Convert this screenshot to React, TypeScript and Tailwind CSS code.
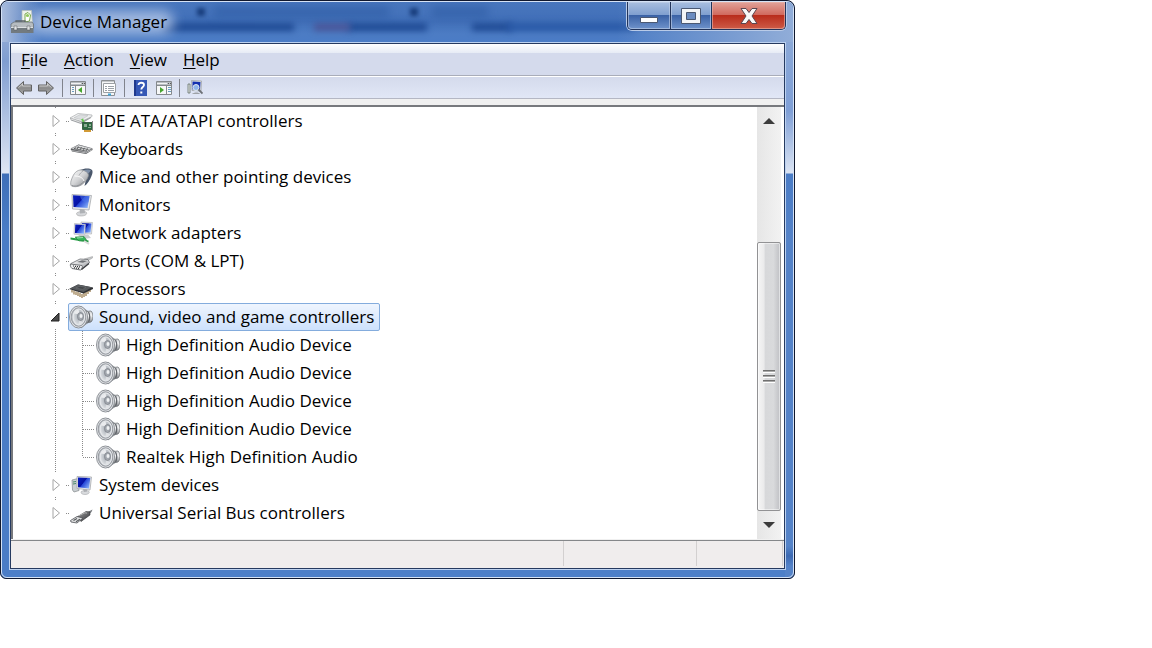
import { useState } from "react";
import type { ReactNode } from "react";

type IconName =
  | "ide"
  | "keyboard"
  | "mouse"
  | "monitor"
  | "network"
  | "port"
  | "cpu"
  | "speaker"
  | "system"
  | "usb";

type Category = {
  label: string;
  icon: IconName;
  children?: string[];
};

const CATEGORIES: Category[] = [
  { label: "IDE ATA/ATAPI controllers", icon: "ide" },
  { label: "Keyboards", icon: "keyboard" },
  { label: "Mice and other pointing devices", icon: "mouse" },
  { label: "Monitors", icon: "monitor" },
  { label: "Network adapters", icon: "network" },
  { label: "Ports (COM & LPT)", icon: "port" },
  { label: "Processors", icon: "cpu" },
  {
    label: "Sound, video and game controllers",
    icon: "speaker",
    children: [
      "High Definition Audio Device",
      "High Definition Audio Device",
      "High Definition Audio Device",
      "High Definition Audio Device",
      "Realtek High Definition Audio",
    ],
  },
  { label: "System devices", icon: "system" },
  { label: "Universal Serial Bus controllers", icon: "usb" },
];

const MENUS = ["File", "Action", "View", "Help"];

const dotsDown = "bg-[repeating-linear-gradient(to_bottom,#8a8a8a_0_1px,transparent_1px_2px)]";
const dotsAcross = "bg-[repeating-linear-gradient(to_right,#8a8a8a_0_1px,transparent_1px_2px)]";

// shared gradients for the device icons
function IconDefs() {
  return (
    <svg className="absolute size-0" aria-hidden="true">
      <defs>
        <linearGradient id="screen" x1="0" y1="0" x2="1" y2="0.7">
          <stop offset="0" stopColor="#0a1fc0" />
          <stop offset="0.5" stopColor="#0612a4" />
          <stop offset="0.55" stopColor="#2546d8" />
          <stop offset="1" stopColor="#7fa8f6" />
        </linearGradient>
        <linearGradient id="metal" x1="0" y1="0" x2="1" y2="1">
          <stop offset="0" stopColor="#fbfbfb" />
          <stop offset="0.5" stopColor="#d2d3d5" />
          <stop offset="1" stopColor="#808388" />
        </linearGradient>
        <linearGradient id="darkMetal" x1="0" y1="0" x2="1" y2="1">
          <stop offset="0" stopColor="#a0a0a0" />
          <stop offset="1" stopColor="#303236" />
        </linearGradient>
        <linearGradient id="magnet" x1="0" y1="0" x2="0" y2="1">
          <stop offset="0" stopColor="#d6d8db" />
          <stop offset="0.4" stopColor="#f2f3f4" />
          <stop offset="1" stopColor="#74777c" />
        </linearGradient>
        <radialGradient id="cone" cx="0.6" cy="0.45" r="0.6">
          <stop offset="0" stopColor="#8f959c" />
          <stop offset="0.5" stopColor="#bcc1c7" />
          <stop offset="1" stopColor="#dfe2e5" />
        </radialGradient>
        <linearGradient id="arrow" x1="0" y1="0" x2="0" y2="1">
          <stop offset="0" stopColor="#c2c2c2" />
          <stop offset="0.5" stopColor="#8b8b8b" />
          <stop offset="1" stopColor="#a8a8a8" />
        </linearGradient>
      </defs>
    </svg>
  );
}

const ICONS: Record<IconName, ReactNode> = {
  ide: (
    <>
      <path d="m1 9 1 2.500 10 3.500 10-6V6z" fill="#9c9fa2" />
      <path d="M1 9 9 4.500 23 6v1.500l-10.500 5z" fill="#eff0f1" stroke="#a9acae" strokeWidth=".7" />
      <path d="m5 8.700 6-3 8 .9-6.500 4z" fill="#dcdee0" stroke="#b5b8ba" strokeWidth=".5" />
      <path d="m2 10 10 3.500" stroke="#f5f5f5" strokeWidth=".8" />
      <path d="m12 10.500 2-1 1.500 3-1.500 1z" fill="#67c953" />
      <path d="M13.500 13.500h10v7h-10z" fill="#2d6940" stroke="#244a31" strokeWidth=".8" />
      <path d="M15 15h3v3h-3zM20 15h2v2h-2zM19 18h3v1h-3z" fill="#8caa94" />
      <path d="M15 21h7v2h-7z" fill="#d19a35" />
      <path d="M23.500 12v10" stroke="#888" />
    </>
  ),
  keyboard: (
    <>
      <path d="m1.500 12 8-4.500 14 4v1.500L17 17 3 14.500z" fill="#5b5d60" />
      <path d="m2 11.500 7.500-3.500 13.500 3.500-6.500 3.500z" fill="#e2e3e4" stroke="#85878a" strokeWidth=".5" />
      <path
        d="m5 11.500 12 2.500M7.500 10l12 2.600M6.500 10l-1 2M9.500 9.500 8 12.500M12.500 10l-1.500 3M15.500 10.800l-1.500 3M18.500 11.400l-1.500 3"
        stroke="#55585b"
        strokeWidth=".8"
        fill="none"
      />
      <path d="m2 13.500 14.500 2.300 6.500-3" stroke="#c9cacc" strokeWidth=".8" fill="none" />
    </>
  ),
  mouse: (
    <>
      <path d="M11 5c4-1.500 9-2.500 12 0 1 1 .5 4-.5 6-1.500 4-4 8-7 10l2-9c0-3-3-5-6.500-7z" fill="#4a576b" />
      <path d="M14 5.500c3-1 6-1.500 8 0l-3.500 4c-.5-2-2.500-3-4.500-4z" fill="#7e8fa8" />
      <path
        d="M2 16c2-6 4-10 9-11 4 0 8 2 8.500 5-.5 4-4 8-8 10.500-3 1.500-7 1.500-9 .5-1-1-1-3-.5-5z"
        fill="url(#metal)"
        stroke="#8c8f94"
        strokeWidth=".7"
      />
      <path d="M5.500 11c4 0 8 1 9.500 5" stroke="#fff" strokeWidth=".9" fill="none" />
      <path d="M10 10.500c1-2 2-3 4-4.500" stroke="#9fa2a7" strokeWidth=".8" fill="none" />
      <path d="M3 20.500c4 1.500 8 0 12-4" stroke="#8e9196" fill="none" />
    </>
  ),
  monitor: (
    <>
      <path d="M7.500 20.500c0-2 9-3 10-1 1 2-2 3.500-5 3.500s-5-.5-5-2.500z" fill="#d5d7da" stroke="#999" strokeWidth=".5" />
      <path d="m10.500 16 5-.5.5 4.500-5 .5z" fill="#aeb1b5" />
      <path d="M3 1.500 22.500 2.500 20 17 3.500 16z" fill="#e6e8eb" stroke="#a7aaad" strokeWidth=".8" />
      <path d="m4 2.300 16.500.9L18.500 15 4.500 14z" fill="url(#screen)" />
      <path d="m11 2.700 9.500.5-1 6C16 10 12 8 11 2.700z" fill="#4a74e8" opacity=".55" />
    </>
  ),
  network: (
    <>
      <path d="m12 1 11.500.5-1 11.500-10-.5z" fill="#e6e8eb" stroke="#a7aaad" strokeWidth=".6" />
      <path d="m13 2 9.500.5-1 9-8 .3z" fill="url(#screen)" />
      <path d="m5.500 2.500 11 .8-.7 10.700-10.800-.8z" fill="#e6e8eb" stroke="#a7aaad" strokeWidth=".6" />
      <path d="m6.300 3.500 9.200.6-.6 8.600-9-.6z" fill="url(#screen)" />
      <path d="m9 14 10-.5 3 3.500-8 1z" fill="#c9cccf" />
      <path d="m1.500 16.500 7 1 11 2v2l-9-1.500-9-1.500z" fill="#239c43" />
      <path d="m6 16 9-.5 3 4-8 .5z" fill="#35b457" stroke="#1e7735" strokeWidth=".5" />
      <path d="m8 17 6-.5" stroke="#9be6ae" />
      <path d="m15 20 5 3" stroke="#d8d8d8" strokeWidth="2" />
    </>
  ),
  port: (
    <>
      <path d="m15 10 8.500-2.500v1.500l-6 3.500z" fill="#c4c6c8" stroke="#888" strokeWidth=".4" />
      <path d="m2 14.500 9-4.500 8 .5 1.500 3-8 7-9-1.500z" fill="url(#metal)" stroke="#6c6f73" strokeWidth=".8" />
      <path d="m1.500 15 11.500 1.500c1 1 0 4-1.500 4.500l-8.500-1.500C1.500 18 1 16.500 1.500 15z" fill="#eeeff0" stroke="#55585c" strokeWidth=".8" />
      <path d="M4 17h1m1 .3h1m1 .3h1m1 .3h1m-6 1h1m1 .3h1m1 .2h1" stroke="#333" strokeWidth="1.200" />
      <path d="m8 13 5-1.800 5 .8-4 1.800z" fill="#6f7276" />
      <path d="m12.500 20.500 7.500-6" stroke="#3a3c3f" strokeWidth="1.200" />
    </>
  ),
  cpu: (
    <>
      <path
        d="M3 13v2.500m2-2v4m2-3v3.500m2-3v4m2-3v4m2-3v4m2-5v4m2-5v4m2-6v4m2-5v3"
        stroke="#8a6a35"
        strokeWidth="1.100"
      />
      <path d="m0 12 9-4.500 15 3V12l-9.500 4.500z" fill="#2f3134" />
      <path d="m1 11.500 8-4 14 2.800-8.500 4.700z" fill="#56595c" />
      <path d="m7 11 4-1.800 6 1.200-3.500 2z" fill="#44474a" stroke="#7c7f82" strokeWidth=".4" />
    </>
  ),
  speaker: (
    <>
      <path d="M12 1.500 19 6.500v11L12 23z" fill="#a8acb2" stroke="#7d8187" strokeWidth=".7" />
      <path d="M17.500 6.500 22 6c2.500 2 2.500 9 0 11l-4.500 1z" fill="url(#magnet)" stroke="#63676c" strokeWidth=".7" />
      <path d="M19.500 7c1.500 3 1.500 7 0 10" stroke="#62666b" strokeWidth="1.300" fill="none" />
      <ellipse cx="9.500" cy="12" rx="9" ry="11" fill="#e4e6e9" stroke="#85898f" strokeWidth=".9" />
      <ellipse cx="9.500" cy="12" rx="7.300" ry="9.300" fill="#b9bdc3" stroke="#82868c" strokeWidth=".7" />
      <ellipse cx="9.800" cy="12" rx="5.800" ry="8" fill="url(#cone)" stroke="#eceef0" strokeWidth=".9" />
      <path d="M5 8.500C6 6 7.500 4.800 9.500 4.500l1.500 5z" fill="#eef0f2" opacity=".9" />
      <path d="m10 15 3.500 2c-1 1.800-2.500 2.500-4 2.500z" fill="#e8eaed" opacity=".7" />
      <ellipse cx="11.500" cy="11.500" rx="3" ry="4" fill="#a3a8af" stroke="#7b8087" strokeWidth=".7" />
      <ellipse cx="12" cy="11" rx="1.500" ry="2" fill="#eff1f3" />
    </>
  ),
  system: (
    <>
      <path d="m3 7 6-1.500 1 12L5 19l-1.500-2z" fill="#c9ced1" stroke="#84898c" strokeWidth=".7" />
      <path d="m4 9 3-.5M4 11l3-.5" stroke="#4c8a6b" />
      <path d="M12 19c0-1.500 7-2 8-.5 1 1.500-1 3-4 3s-4-1-4-2.500z" fill="#d8dadd" stroke="#9a9da0" strokeWidth=".5" />
      <path d="m14 16 4-.5v3l-3 .5z" fill="#abaeb2" />
      <path d="M8 3.500 22.500 4 21 17 8 15.500z" fill="#e6e8eb" stroke="#a7aaad" strokeWidth=".8" />
      <path d="m9 4.500 12.300.4L20 15.500l-11-1.200z" fill="url(#screen)" />
    </>
  ),
  usb: (
    <>
      <path d="m17 12 6.500-3.500-1 2.500-4 3z" fill="#777a7e" />
      <path d="m8 16 9-5.500 4 .5v3l-9 6.500z" fill="url(#darkMetal)" stroke="#2e3033" strokeWidth=".6" />
      <path d="m1.500 19.500 6.500-4 6 1.500-6 5-6-1z" fill="#dedfe0" stroke="#4e5155" strokeWidth=".8" />
      <path d="m4.500 19.500 3.500-2m-1 3.300 4-2.500" stroke="#55585b" strokeWidth="1.100" />
      <path d="m10 14.700 6-3 2 .5" stroke="#c4c4c4" strokeWidth=".8" fill="none" />
    </>
  ),
};

function DeviceIcon({ name }: { name: IconName }) {
  return (
    <svg viewBox="0 0 24 24" className="size-6 shrink-0" aria-hidden="true">
      {ICONS[name]}
    </svg>
  );
}

function AppIcon() {
  return (
    <svg viewBox="0 0 24 24" className="size-6" aria-hidden="true">
      <path d="M12 .5h9.500l1 13H12z" fill="#eef2ec" stroke="#b6beb8" strokeWidth=".7" />
      <path d="M15 12V4l3-1.500L20.500 5l-1 6z" fill="#fff" stroke="#7aa94c" />
      <circle cx="17.500" cy="5.500" r="1.600" fill="#92c95a" />
      <path d="M6 14v-3h9v3" fill="none" stroke="#5d6468" strokeWidth="1.300" />
      <path d="m1 14 3-2h18l1.500 2v4H1z" fill="#b6bcc0" stroke="#60676b" strokeWidth=".7" />
      <path d="M1 17h22.500v6H1z" fill="#727a7f" />
      <path d="M1 17.500h22" stroke="#dce0e2" />
      <path d="M4 16h3v4H4zM17 16h3v4h-3z" fill="#dfe2e4" stroke="#545b5f" strokeWidth=".5" />
    </svg>
  );
}

function ArrowIcon({ flip }: { flip?: boolean }) {
  return (
    <svg viewBox="0 0 18 16" className={flip ? "h-4 w-[18px] -scale-x-100" : "h-4 w-[18px]"} aria-hidden="true">
      <path d="m1.500 8 7-6.500v3.500h8v6h-8v3.500z" fill="url(#arrow)" stroke="#626262" strokeLinejoin="round" />
      <path d="m3.500 7.500 4-3.500v2h8" fill="none" stroke="#cfcfcf" strokeWidth=".8" />
    </svg>
  );
}

function PaneIcon({ flip }: { flip?: boolean }) {
  return (
    <svg viewBox="0 0 16 14" className="h-3.5 w-4" aria-hidden="true">
      <path d="M.5.5h15v13H.5z" fill="#f7f8f8" stroke="#85898d" />
      <path d="M1 1h14v3H1z" fill="#b8bdc2" />
      <path d="M1 2.500h10" stroke="#f2f2f2" />
      <path d="M12 2.500h1m1 0h1" stroke="#555" />
      <path d="M1 4.500h14" stroke="#85898d" />
      {flip ? (
        <>
          <path d="M10.500 5v8" stroke="#85898d" />
          <path d="M12 6.500h3m-3 2h3m-3 2h3" stroke="#6a9cc0" />
          <path d="m4 6 4 3-4 3z" fill="#45a52e" />
        </>
      ) : (
        <>
          <path d="M5.500 5v8" stroke="#85898d" />
          <path d="M2 6.500h2m-2 2h2m-2 2h2" stroke="#6a9cc0" />
          <path d="M12 6 8 9l4 3z" fill="#45a52e" />
        </>
      )}
    </svg>
  );
}

function PropertiesIcon() {
  return (
    <svg viewBox="0 0 16 16" className="size-4" aria-hidden="true">
      <path d="M.5.5h13v15H.5z" fill="#f4f5f6" stroke="#8b8f93" />
      <path d="M2.500 3.500h12v9h-12z" fill="#fff" stroke="#9ca0a4" />
      <path d="M1 1.500h12" stroke="#c5c8ca" />
      <path d="M4 6.500h2m1 0h6M4 8.500h2m1 0h6M4 10.500h2m1 0h6" stroke="#9aa1a8" />
      <path d="M7 14.500h3" stroke="#3da5d8" strokeWidth="2" />
    </svg>
  );
}

function HelpIcon() {
  return (
    <svg viewBox="0 0 17 16" className="h-4 w-[17px]" aria-hidden="true">
      <path d="M2 0h13v16H2z" fill="#3557b5" />
      <path d="M2 0h2v16H2z" fill="#20398c" />
      <path d="M6.500 5c0-3 5.500-3 5.500 0 0 2-2.700 2-2.700 4.500" stroke="#fff" strokeWidth="1.800" fill="none" />
      <path d="M8.300 11.500h2v2h-2z" fill="#fff" />
    </svg>
  );
}

function ScanIcon() {
  return (
    <svg viewBox="0 0 16 15" className="h-[15px] w-4" aria-hidden="true">
      <path d="M1 4h2v9H1z" fill="#e3e7e4" stroke="#64716b" strokeWidth=".8" />
      <path d="m4.500.5 10 .5-.5 10-9-.5z" fill="#dfe2e6" stroke="#9a9da1" strokeWidth=".7" />
      <path d="m5.500 1.500 8 .5-.5 8-7.500-.5z" fill="#1530b0" />
      <path d="M5 14c2-2 7-2 8 0z" fill="#9ea2a6" />
      <circle cx="9" cy="7.500" r="3" fill="#8fb4ea" stroke="#dfe6ee" />
      <path d="m11.500 9.500 4 4" stroke="#6c7075" strokeWidth="1.800" />
    </svg>
  );
}

function ToolButton({ label, children }: { label: string; children: ReactNode }) {
  return (
    <button type="button" aria-label={label} className="flex h-5 items-center">
      {children}
    </button>
  );
}

function Separator() {
  return <span className="h-[18px] w-px bg-[#80838c]" />;
}

function Expander({ open, label, onClick }: { open: boolean; label: string; onClick: () => void }) {
  return (
    <button type="button" aria-label={label} aria-expanded={open} onClick={onClick} className="h-3.5 w-[11px]">
      <svg viewBox="0 0 11 14" className="h-3.5 w-[11px]" aria-hidden="true">
        {open ? (
          <path d="M9 3v8H1z" fill="#4a4a4a" stroke="#222" />
        ) : (
          <path d="M3 1.500v11L9.500 7z" fill="#fff" stroke="#a5a5a5" />
        )}
      </svg>
    </button>
  );
}

function TitleBar() {
  return (
    <header className="relative flex h-10 items-start overflow-hidden rounded-t-md">
      {/* page showing through the glass */}
      <div className="absolute inset-0 bg-[linear-gradient(to_bottom,#4876bd,#416fb8_50%,#4c7cc4_80%,#4b7cc6)]" />
      <div className="absolute top-[21px] left-40 h-2 w-[132px] bg-[#1f4a94] blur-[3px]" />
      <div className="absolute top-[21px] left-[345px] h-2 w-20 bg-[#1f4a94] blur-[3px]" />
      <div className="absolute top-[21px] left-[312px] h-2 w-9 bg-[#4a5699] blur-[3px]" />
      <div className="absolute top-[21px] left-[470px] h-2 w-10 bg-[#1f4a94] blur-[3px]" />
      <div className="absolute top-[21px] left-[505px] h-2 w-32 bg-[#2858a6] blur-[3px]" />
      <div className="absolute top-1 left-[212px] h-3 w-[175px] bg-[#2f5da5] opacity-60 blur-[4px]" />
      <div className="absolute top-1 left-[430px] h-3 w-14 bg-[#2f5da5] opacity-60 blur-[4px]" />
      <div className="absolute top-1.5 left-[195px] size-2 bg-[#183d7c] blur-[2px]" />
      <div className="absolute top-1.5 left-[408px] size-2 bg-[#183d7c] blur-[2px]" />
      <div className="absolute inset-y-0 left-0 w-10 bg-gradient-to-r from-[#a9bcdd] to-transparent" />
      <div className="absolute inset-y-0 right-0 w-44 bg-gradient-to-r from-transparent to-[#91add8]" />
      <div className="absolute top-2 left-7 h-6 w-36 rounded-full bg-[#b4c8e8] opacity-80 blur-[6px]" />

      <div className="relative ml-2 flex h-10 flex-1 items-center gap-1.5">
        <AppIcon />
        <h1 className="text-[17px] leading-6 text-black">Device Manager</h1>
      </div>
      <div className="relative mr-[7px] flex h-7 divide-x divide-[#22345a] rounded-b-[5px] border border-t-0 border-[#22345a] shadow-[0_0_0_1px_#b9cbe8]">
        <button
          type="button"
          aria-label="Minimize"
          className="flex w-[43px] items-center justify-center rounded-bl bg-[linear-gradient(to_bottom,#a9bfe0,#7f9ecf_48%,#3b62a6_50%,#6f93cb)] inset-ring inset-ring-[#c3d1e8]/60"
        >
          <svg viewBox="0 0 18 14" className="h-3.5 w-[18px]" aria-hidden="true">
            <path d="M.5 8.500h17v5H.5z" fill="#fff" stroke="#4b5872" />
          </svg>
        </button>
        <button
          type="button"
          aria-label="Maximize"
          className="flex w-[41px] items-center justify-center bg-[linear-gradient(to_bottom,#a9bfe0,#7f9ecf_48%,#3b62a6_50%,#6f93cb)] inset-ring inset-ring-[#c3d1e8]/60"
        >
          <svg viewBox="0 0 20 16" className="h-4 w-5" aria-hidden="true">
            <path d="M.5.5h19v15H.5z" fill="#f4f5f7" stroke="#4b5872" />
            <path d="M5.500 4.500h9v7h-9z" fill="#6c8cc0" stroke="#4b5872" />
          </svg>
        </button>
        <button
          type="button"
          aria-label="Close"
          className="flex w-[73px] items-center justify-center rounded-br bg-[linear-gradient(to_bottom,#e2a39a,#d0695d_48%,#b92d1c_50%,#cd5b47)] inset-ring inset-ring-[#e8b8ae]/60"
        >
          <svg viewBox="0 0 18 16" className="h-4 w-[18px]" aria-hidden="true">
            <path
              d="M1 .5h5l3 4 3-4h5L12 8l5 7.500h-5l-3-4-3 4H1L6 8z"
              fill="#f8f8f8"
              stroke="#5a4650"
              strokeLinejoin="round"
            />
          </svg>
        </button>
      </div>
    </header>
  );
}

function ScrollBar() {
  return (
    <div className="mr-[3px] flex w-6 flex-col bg-gradient-to-r from-[#e6e6e6] to-[#f2f2f2]">
      <button type="button" aria-label="Scroll up" className="flex h-7 items-center justify-center">
        <svg viewBox="0 0 12 6" className="h-1.5 w-3" aria-hidden="true">
          <path d="m0 6 6-6 6 6z" fill="#3c3c3c" />
        </svg>
      </button>
      <div className="flex flex-1 flex-col pt-[107px]">
        <div className="flex flex-1 flex-col items-center justify-center gap-0.5 rounded-xs border border-[#929294] bg-[linear-gradient(to_right,#f5f5f5,#eaeaeb_28%,#d7d8da_32%,#d9dadc_70%,#bfc0c4)] inset-ring inset-ring-white/50">
          <span className="h-[3px] w-3 border-t border-b border-t-[#707070] border-b-white bg-[#aaa]" />
          <span className="h-[3px] w-3 border-t border-b border-t-[#707070] border-b-white bg-[#aaa]" />
          <span className="h-[3px] w-3 border-t border-b border-t-[#707070] border-b-white bg-[#aaa]" />
        </div>
      </div>
      <button type="button" aria-label="Scroll down" className="flex h-7 items-center justify-center">
        <svg viewBox="0 0 12 6" className="h-1.5 w-3" aria-hidden="true">
          <path d="m0 0 6 6 6-6z" fill="#3c3c3c" />
        </svg>
      </button>
    </div>
  );
}

export default function App() {
  const [openItems, setOpenItems] = useState<string[]>(["Sound, video and game controllers"]);
  const [selected, setSelected] = useState("Sound, video and game controllers");

  const toggle = (label: string) => {
    setOpenItems((prev) => (prev.includes(label) ? prev.filter((v) => v !== label) : [...prev, label]));
  };

  const itemClass = "flex h-7 items-center gap-1.5 rounded-xs border pr-[5px] whitespace-nowrap";
  const selectedClass = "border-[#84acdd] bg-gradient-to-b from-[#eff5fe] to-[#cde1fc]";

  return (
    <div className="min-h-screen bg-white font-['Open_Sans','Noto_Sans',sans-serif] text-[17px] text-black">
      <IconDefs />
      <div className="w-full max-w-[795px] rounded-t-lg rounded-b-md border border-[#10182e] [background:linear-gradient(to_bottom,#a9bcdd,#7f9dd0_60px,#dfe6f3_172px,#3f6fb8_173px,#4a7cc6_230px,#4a7cc6)_0_0/9px_100%_no-repeat,linear-gradient(to_bottom,#91add8,#7f9fd6_110px,#dbe4f3_172px,#4a7cc6_173px,#5583c8_240px,#5583c8_545px,#3c69b2_555px,#5583c8_565px)_100%_0/9px_100%_no-repeat,#4d7fc8]">
        <div className="rounded-t-lg rounded-b-md border border-[#d5e2f5]">
          <TitleBar />
          <div className="mx-[7px] mb-[7px] border border-[#bdd2f0]">
            <div className="border border-[#263a60] bg-[#f0f0f0]">
              <nav className="flex h-8 items-center gap-4 border-b border-[#a9adb9] bg-[linear-gradient(to_bottom,#ffffff,#e6ebf5_9px,#d4daec_9px)] px-2.5">
                {MENUS.map((menu) => (
                  <button key={menu} type="button" className="leading-6">
                    <span className="underline decoration-1 underline-offset-2">{menu[0]}</span>
                    {menu.slice(1)}
                  </button>
                ))}
              </nav>
              <div className="flex h-[23px] items-center gap-[7px] border-t border-b border-t-white border-b-[#b4b7c4] bg-gradient-to-b from-[#d4daec] to-[#e1e7f6] px-1">
                <div className="flex gap-1">
                  <ToolButton label="Back">
                    <ArrowIcon />
                  </ToolButton>
                  <ToolButton label="Forward">
                    <ArrowIcon flip />
                  </ToolButton>
                </div>
                <Separator />
                <ToolButton label="Show/Hide Console Tree">
                  <PaneIcon />
                </ToolButton>
                <Separator />
                <ToolButton label="Properties">
                  <PropertiesIcon />
                </ToolButton>
                <Separator />
                <ToolButton label="Help">
                  <HelpIcon />
                </ToolButton>
                <ToolButton label="Show/Hide Action Pane">
                  <PaneIcon flip />
                </ToolButton>
                <Separator />
                <ToolButton label="Scan for hardware changes">
                  <ScanIcon />
                </ToolButton>
              </div>

              <main className="mt-1.5 flex border-t-2 border-l-2 border-[#77797d] bg-white">
                <ul className="min-w-0 flex-1 overflow-hidden pb-3 pl-[37px]">
                  {CATEGORIES.map((cat, index) => {
                    const open = openItems.includes(cat.label) && !!cat.children;
                    const last = index === CATEGORIES.length - 1;
                    return (
                      <li key={cat.label}>
                        <div className="flex h-7 items-center">
                          <div className="flex h-full w-[11px] flex-col items-center justify-between">
                            <span className={`h-0.5 w-px ${dotsDown}`} />
                            <Expander open={open} label={cat.label} onClick={() => toggle(cat.label)} />
                            <span className={`h-0.5 w-px ${last ? "" : dotsDown}`} />
                          </div>
                          <span className={`-mr-0.5 ml-[5px] h-px w-1 ${dotsAcross}`} />
                          <button
                            type="button"
                            onClick={() => setSelected(cat.label)}
                            className={`${itemClass} ${selected === cat.label ? selectedClass : "border-transparent"}`}
                          >
                            <DeviceIcon name={cat.icon} />
                            {cat.label}
                          </button>
                        </div>
                        {open && (
                          <ul>
                            {cat.children?.map((child, i) => (
                              <li key={i} className="flex h-7 items-center">
                                <span className="flex h-full w-[11px] justify-center">
                                  <span className={`h-full w-px ${dotsDown}`} />
                                </span>
                                <span className="ml-[21px] h-full w-px">
                                  <span
                                    className={`block w-px ${dotsDown} ${
                                      i === cat.children!.length - 1 ? "h-1/2" : "h-full"
                                    }`}
                                  />
                                </span>
                                <span className={`h-px w-3 ${dotsAcross}`} />
                                <button
                                  type="button"
                                  onClick={() => setSelected(`${child}-${i}`)}
                                  className={`${itemClass} ${
                                    selected === `${child}-${i}` ? selectedClass : "border-transparent"
                                  }`}
                                >
                                  <DeviceIcon name={cat.icon} />
                                  {child}
                                </button>
                              </li>
                            ))}
                          </ul>
                        )}
                      </li>
                    );
                  })}
                </ul>
                <ScrollBar />
              </main>

              <footer className="mt-px flex h-7 border-t border-[#85878a] bg-[#f0eded] pr-px pb-0.5">
                <span className="flex-1 border-r border-[#d3d0d0]" />
                <span className="w-[133px] border-r border-[#d3d0d0]" />
                <span className="w-[86px] border-r border-[#d3d0d0]" />
              </footer>
            </div>
          </div>
        </div>
      </div>
    </div>
  );
}
